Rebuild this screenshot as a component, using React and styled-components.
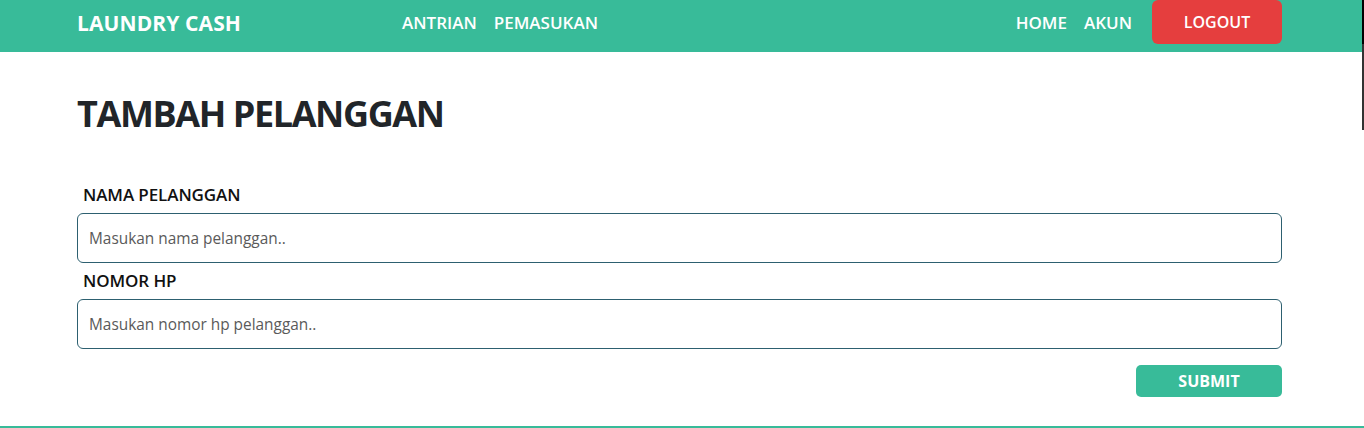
import React from 'react';
import styled, { createGlobalStyle } from 'styled-components';

const GlobalStyle = createGlobalStyle`
  body {
    margin: 0;
    background: #fff;
    font-family: "Open Sans", "Noto Sans", sans-serif;
    color: #212529;
  }
`;

const Page = styled.div`
  min-height: 428px;
  display: flex;
  flex-direction: column;
`;

const Nav = styled.nav`
  height: 52px;
  background: #38bb99;
  display: flex;
  align-items: flex-start;
  padding: 0 82px 0 77px;
`;

const Brand = styled.div`
  width: 325px;
  height: 46px;
  display: flex;
  align-items: center;
  color: #fff;
  font-weight: 700;
  font-size: 21px;
  letter-spacing: 0.1px;
`;

const Links = styled.div`
  display: flex;
  align-items: center;
  gap: 17px;
  height: 44px;
  margin-left: ${(p) => (p.$push ? 'auto' : '0')};
`;

const NavLink = styled.a`
  color: #fff;
  font-size: 17px;
  font-weight: 600;
  text-decoration: none;
`;

const LogoutButton = styled.button`
  margin-left: 20px;
  width: 130px;
  height: 44px;
  border: none;
  border-radius: 6px;
  background: #e53e3e;
  color: #fff;
  font-family: inherit;
  font-size: 16px;
  font-weight: 600;
`;

const Main = styled.main`
  flex: 1;
  padding: 0 82px 0 77px;
`;

const Title = styled.h1`
  margin: 44px 0 52px;
  font-size: 36px;
  font-weight: 700;
  line-height: 1;
  color: #212529;
  letter-spacing: -1.4px;
`;

const Label = styled.label`
  display: block;
  padding-left: 6px;
  margin-bottom: 7px;
  font-size: 17px;
  font-weight: 600;
  color: #111;
  line-height: 22px;
  letter-spacing: -0.1px;
`;

const Field = styled.div`
  margin-bottom: 7px;
`;

const Input = styled.input`
  box-sizing: border-box;
  width: 100%;
  height: 50px;
  border: 1px solid #2d6070;
  border-radius: 6px;
  padding: 0 11px;
  font-family: inherit;
  font-size: 15.4px;
  color: #333;
  outline: none;

  &::placeholder {
    color: #5a5a5a;
  }
`;

const Actions = styled.div`
  display: flex;
  justify-content: flex-end;
  margin-top: 16px;
`;

const SubmitButton = styled.button`
  width: 146px;
  height: 32px;
  border: none;
  border-radius: 5px;
  background: #38bb99;
  color: #fff;
  font-family: inherit;
  font-size: 16px;
  font-weight: 700;
`;

const Footer = styled.footer`
  height: 2px;
  background: #38bb99;
`;

const ScrollTrack = styled.div`
  position: fixed;
  top: 0;
  right: 0;
  width: 2px;
  height: 130px;
  background: linear-gradient(#000 0 44px, #333 44px);
`;

export default function App() {
  return (
    <Page>
      <GlobalStyle />
      <Nav>
        <Brand>LAUNDRY CASH</Brand>
        <Links>
          <NavLink href="#">ANTRIAN</NavLink>
          <NavLink href="#">PEMASUKAN</NavLink>
        </Links>
        <Links $push>
          <NavLink href="#">HOME</NavLink>
          <NavLink href="#">AKUN</NavLink>
        </Links>
        <LogoutButton>LOGOUT</LogoutButton>
      </Nav>
      <Main>
        <Title>TAMBAH PELANGGAN</Title>
        <Field>
          <Label>NAMA PELANGGAN</Label>
          <Input placeholder="Masukan nama pelanggan.." />
        </Field>
        <Field>
          <Label>NOMOR HP</Label>
          <Input placeholder="Masukan nomor hp pelanggan.." />
        </Field>
        <Actions>
          <SubmitButton>SUBMIT</SubmitButton>
        </Actions>
      </Main>
      <Footer />
      <ScrollTrack />
    </Page>
  );
}
